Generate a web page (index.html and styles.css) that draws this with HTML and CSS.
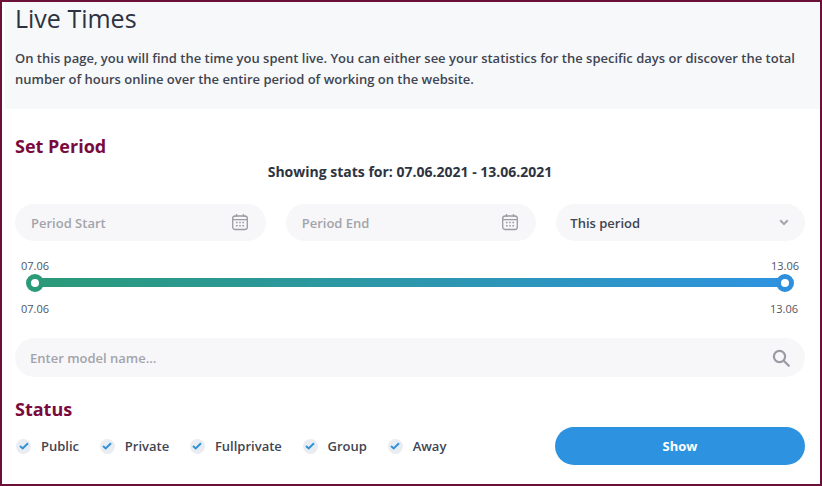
FILE: index.html
```html
<!DOCTYPE html>
<html lang="en">
<head>
    <meta charset="UTF-8">
    <meta name="viewport" content="width=device-width, initial-scale=1.0">
    <title>Live Times</title>
    <link rel="stylesheet" href="styles.css">
</head>
<body>
    <div class="frame">
        <header class="intro">
            <h1>Live Times</h1>
            <p>On this page, you will find the time you spent live. You can either see your statistics for the specific days or discover the total number of hours online over the entire period of working on the website.</p>
        </header>

        <section class="content">
            <h2 class="section-title">Set Period</h2>
            <div class="showing">Showing stats for: 07.06.2021 - 13.06.2021</div>

            <div class="period-row">
                <div class="pill placeholder">
                    <span>Period Start</span>
                    <svg class="cal" width="18" height="18" viewBox="0 0 18 18" fill="none" stroke="#9b9ca3" stroke-width="1.3">
                        <rect x="1.7" y="3" width="14.6" height="13.5" rx="2.5"/>
                        <path d="M1.7 6.6h14.6M5.5 1v3M12.5 1v3"/>
                        <path d="M5 9.5h1.6M8.2 9.5h1.6M11.4 9.5h1.6M5 12.7h1.6M8.2 12.7h1.6M11.4 12.7h1.6" stroke-width="1.5"/>
                    </svg>
                </div>
                <div class="pill placeholder">
                    <span>Period End</span>
                    <svg class="cal" width="18" height="18" viewBox="0 0 18 18" fill="none" stroke="#9b9ca3" stroke-width="1.3">
                        <rect x="1.7" y="3" width="14.6" height="13.5" rx="2.5"/>
                        <path d="M1.7 6.6h14.6M5.5 1v3M12.5 1v3"/>
                        <path d="M5 9.5h1.6M8.2 9.5h1.6M11.4 9.5h1.6M5 12.7h1.6M8.2 12.7h1.6M11.4 12.7h1.6" stroke-width="1.5"/>
                    </svg>
                </div>
                <div class="pill select">
                    <span>This period</span>
                    <svg width="10" height="7" viewBox="0 0 10 7" fill="none" stroke="#a5a6ac" stroke-width="2">
                        <path d="M1.2 1.3 5 5l3.8-3.7"/>
                    </svg>
                </div>
            </div>

            <div class="slider">
                <div class="slider-labels top"><span>07.06</span><span>13.06</span></div>
                <div class="track">
                    <span class="thumb thumb-start"></span>
                    <span class="thumb thumb-end"></span>
                </div>
                <div class="slider-labels bottom"><span>07.06</span><span>13.06</span></div>
            </div>

            <div class="search placeholder">
                <span>Enter model name...</span>
                <svg width="18" height="18" viewBox="0 0 18 18" fill="none" stroke="#9b9ca3" stroke-width="2.2">
                    <circle cx="7.5" cy="7.5" r="5.6"/>
                    <path d="m11.8 11.8 5 5" stroke-linecap="round"/>
                </svg>
            </div>

            <h2 class="section-title status-title">Status</h2>
            <div class="status-row">
                <div class="checks">
                    <label class="check"><span class="box"><svg width="10" height="8" viewBox="0 0 10 8" fill="none" stroke="#2f93d8" stroke-width="2"><path d="M1 4l2.7 2.4L9 1.2"/></svg></span>Public</label>
                    <label class="check"><span class="box"><svg width="10" height="8" viewBox="0 0 10 8" fill="none" stroke="#2f93d8" stroke-width="2"><path d="M1 4l2.7 2.4L9 1.2"/></svg></span>Private</label>
                    <label class="check"><span class="box"><svg width="10" height="8" viewBox="0 0 10 8" fill="none" stroke="#2f93d8" stroke-width="2"><path d="M1 4l2.7 2.4L9 1.2"/></svg></span>Fullprivate</label>
                    <label class="check"><span class="box"><svg width="10" height="8" viewBox="0 0 10 8" fill="none" stroke="#2f93d8" stroke-width="2"><path d="M1 4l2.7 2.4L9 1.2"/></svg></span>Group</label>
                    <label class="check"><span class="box"><svg width="10" height="8" viewBox="0 0 10 8" fill="none" stroke="#2f93d8" stroke-width="2"><path d="M1 4l2.7 2.4L9 1.2"/></svg></span>Away</label>
                </div>
                <button class="show-btn">Show</button>
            </div>
        </section>
    </div>
</body>
</html>
```

FILE: styles.css
```css
/* Live Times panel */
* {
    box-sizing: border-box;
}

html, body {
    height: 100%;
}

body {
    margin: 0;
    background-color: #fff;
    font-family: "Open Sans", "Liberation Sans", sans-serif;
    color: #2e3440;
    overflow: hidden;
}

.frame {
    height: 486px;
    border: 2px solid #6b1038;
    background-color: #fff;
    overflow: hidden;
}

.intro {
    height: 107px;
    margin-left: 3px;
    padding: 1px 10px 0;
    background-color: #f7f8fa;
}

.intro h1 {
    margin: 0;
    font-size: 25px;
    line-height: 31px;
    font-weight: 500;
    color: #2b3340;
}

.intro p {
    margin: 14px 0 0;
    font-size: 13px;
    line-height: 21px;
    font-weight: 600;
    color: #3f4551;
}

.content {
    padding: 0 15px 0 13px;
}

.section-title {
    margin: 0;
    font-size: 18px;
    line-height: 24px;
    font-weight: 700;
    color: #7a0a3e;
}

.content > .section-title:first-child {
    padding-top: 25px;
    line-height: 24px;
}

.showing {
    margin-top: 4px;
    text-align: center;
    font-size: 14px;
    line-height: 20px;
    font-weight: 700;
    color: #2e3440;
}

.period-row {
    display: flex;
    gap: 20px;
    margin-top: 22px;
}

.pill {
    flex: 1;
    height: 37px;
    display: flex;
    justify-content: space-between;
    align-items: center;
    padding: 0 16px;
    background-color: #f7f7f9;
    border-radius: 19px;
    font-size: 13px;
}

.cal {
    margin: -2px 1px 0 0;
}

.placeholder {
    font-weight: 600;
    color: #a3a4ab;
}

.select {
    padding-right: 16px;
    padding-left: 14px;
    font-weight: 600;
    color: #3f4551;
}

.slider {
    margin-top: 17px;
}

.slider-labels {
    display: flex;
    justify-content: space-between;
    padding: 0 6px;
    font-size: 11px;
    line-height: 15px;
    color: #50555f;
}

.track {
    position: relative;
    height: 9px;
    margin: 5px 20px 0;
    background: linear-gradient(to right, #2a9a78, #2e93e0);
}

.slider-labels.bottom {
    margin-top: 14px;
    padding-right: 7px;
}

.thumb {
    position: absolute;
    top: -4px;
    width: 18px;
    height: 18px;
    border-radius: 50%;
    background-color: #fff;
    border: 5px solid #2a9a78;
}

.thumb-start {
    left: -9px;
}

.thumb-end {
    right: -9px;
    border-color: #2e8fdc;
}

.search {
    height: 39px;
    margin-top: 22px;
    display: flex;
    justify-content: space-between;
    align-items: center;
    padding: 0 15px;
    background-color: #f7f7f9;
    border-radius: 20px;
    font-size: 13px;
}

.status-title {
    margin-top: 20px;
}

.status-row {
    display: flex;
    justify-content: space-between;
    align-items: center;
    margin-top: 6px;
}

.checks {
    display: flex;
    gap: 20.75px;
    padding-left: 1px;
}

.check {
    display: flex;
    align-items: center;
    gap: 10px;
    font-size: 13px;
    font-weight: 600;
    color: #3f4551;
}

.box {
    width: 15px;
    height: 15px;
    display: flex;
    justify-content: center;
    align-items: center;
    background-color: #e9edf2;
    border-radius: 50%;
}

.show-btn {
    width: 250px;
    height: 38px;
    border: none;
    border-radius: 19px;
    background-color: #2d93e0;
    color: #fff;
    font-family: inherit;
    font-size: 13px;
    font-weight: 700;
    cursor: pointer;
}
```
